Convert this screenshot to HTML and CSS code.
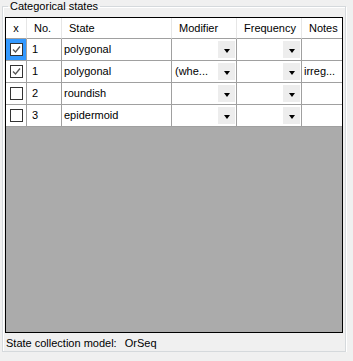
FILE: index.html
```html
<!DOCTYPE html>
<html lang="en">
<head>
    <meta charset="UTF-8">
    <title>Categorical states</title>
    <link rel="stylesheet" href="styles.css">
</head>
<body>
    <fieldset class="group">
        <legend>Categorical states</legend>

        <div class="grid">
            <div class="row head">
                <div class="cell center">x</div>
                <div class="cell">No.</div>
                <div class="cell">State</div>
                <div class="cell">Modifier</div>
                <div class="cell">Frequency</div>
                <div class="cell last">Notes</div>
            </div>

            <div class="row">
                <div class="cell center selected"><span class="check on"><svg viewBox="0 0 11 11"><polyline points="2,5.5 4.5,8 9,2.5"/></svg></span></div>
                <div class="cell num">1</div>
                <div class="cell name">polygonal</div>
                <div class="cell combo"><span class="value"></span><span class="drop"></span></div>
                <div class="cell combo"><span class="value"></span><span class="drop"></span></div>
                <div class="cell last note"></div>
            </div>

            <div class="row">
                <div class="cell center"><span class="check on"><svg viewBox="0 0 11 11"><polyline points="2,5.5 4.5,8 9,2.5"/></svg></span></div>
                <div class="cell num">1</div>
                <div class="cell name">polygonal</div>
                <div class="cell combo"><span class="value">(whe...</span><span class="drop"></span></div>
                <div class="cell combo"><span class="value"></span><span class="drop"></span></div>
                <div class="cell last note">irreg...</div>
            </div>

            <div class="row">
                <div class="cell center"><span class="check"></span></div>
                <div class="cell num">2</div>
                <div class="cell name">roundish</div>
                <div class="cell combo"><span class="value"></span><span class="drop"></span></div>
                <div class="cell combo"><span class="value"></span><span class="drop"></span></div>
                <div class="cell last note"></div>
            </div>

            <div class="row">
                <div class="cell center"><span class="check"></span></div>
                <div class="cell num">3</div>
                <div class="cell name">epidermoid</div>
                <div class="cell combo"><span class="value"></span><span class="drop"></span></div>
                <div class="cell combo"><span class="value"></span><span class="drop"></span></div>
                <div class="cell last note"></div>
            </div>
        </div>

        <div class="status">
            <span>State collection model:</span>
            <span class="model">OrSeq</span>
        </div>
    </fieldset>
</body>
</html>
```

FILE: styles.css
```css
body {
    margin: 0;
    background: #f0f0f0;
    font-family: 'Liberation Sans', Arial, sans-serif;
    font-size: 11px;
    color: #000;
}
.group {
    margin: 0 7px 0 2px;
    padding: 4px 2px 1px 2px;
    border: 1px solid #d5d9dc;
    box-shadow: inset 1px 1px 0 #fff, 1px 1px 0 #fff;
    min-width: 0;
}
.group legend {
    margin-left: 3px;
    padding: 0 2px;
    line-height: 13px;
}
.grid {
    height: 314px;
    border: 1px solid #000;
    background: #ababab;
}
.row {
    display: grid;
    grid-template-columns: 21px 35px 110px 65px 65px 40px;
    height: 22px;
    background: #fff;
}
.cell {
    box-sizing: border-box;
    border-right: 1px solid #a0a0a0;
    border-bottom: 1px solid #a0a0a0;
    line-height: 21px;
    white-space: nowrap;
    overflow: hidden;
}
.cell.last {
    border-right: none;
}
.head {
    height: 21px;
}
.head .cell {
    line-height: 20px;
    padding-left: 7px;
    border-right-color: #e6e6e6;
}
.head .cell.center {
    padding-left: 0;
}
.center {
    text-align: center;
    display: flex;
    align-items: center;
    justify-content: center;
}
.head .center {
    display: block;
}
.selected {
    background: #3399ff;
}
.num {
    padding-left: 5px;
}
.name {
    padding-left: 2px;
}
.note {
    padding-left: 2px;
}
.combo {
    display: flex;
    align-items: center;
    padding-right: 1px;
}
.combo .value {
    flex: 1;
    padding-left: 3px;
}
.drop {
    width: 17px;
    height: 17px;
    background: #ededed;
    display: flex;
    align-items: center;
    justify-content: center;
}
.drop::after {
    content: '';
    margin-top: 3px;
    border-left: 3.5px solid transparent;
    border-right: 3.5px solid transparent;
    border-top: 4px solid #000;
}
.check {
    box-sizing: border-box;
    width: 13px;
    height: 13px;
    border: 1px solid #333;
    background: #fff;
    display: block;
}
.check svg {
    display: block;
    width: 11px;
    height: 11px;
    fill: none;
    stroke: #555;
    stroke-width: 1.3;
}
.status {
    margin-top: 4px;
    padding-left: 1px;
    line-height: 13px;
}
.status .model {
    margin-left: 5px;
}
```
